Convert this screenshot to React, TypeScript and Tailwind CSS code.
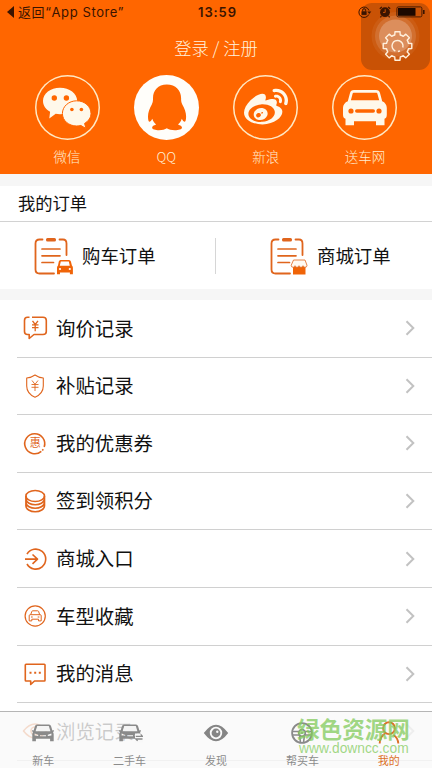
import type { ReactNode } from 'react'
import { FaWeibo } from 'react-icons/fa'

const ORANGE = '#e0651d'

// ── Status bar ──────────────────────────────────────────────────────────────
function StatusBar() {
  return (
    <div className="relative flex h-6 items-center justify-between px-[7px] text-[#3a1400]">
      <div className="flex items-center gap-1">
        <svg width="7" height="12" viewBox="0 0 7 12" fill="currentColor"><path d="M7 0v12L0 6z" /></svg>
        <span className="whitespace-nowrap font-['Inter','Noto_Sans_CJK_SC',sans-serif] text-[13px] leading-none tracking-[0.6px]">
          返回“App Store”
        </span>
      </div>
      <span className="absolute left-[198px] top-[5px] font-['Inter',sans-serif] text-[13px] font-semibold leading-[14px] tracking-[0.9px]">
        13:59
      </span>
      <div className="relative z-10 flex items-center">
        <svg width="14" height="12" viewBox="0 0 14 12" fill="none" stroke="currentColor" strokeWidth="1">
          <path d="M10.8 8.5A5.2 5.2 0 1 1 11 4.5" />
          <path d="M9.3 5.6h4L11.3 8z" fill="currentColor" stroke="none" />
          <path d="M3.6 5.3h5v3.6h-5z" fill="currentColor" stroke="none" />
          <path d="M4.6 5.5V4.2a1.5 1.5 0 0 1 3 0v1.3" />
        </svg>
        <svg className="ml-[7px]" width="12" height="12" viewBox="0 0 12 12">
          <circle cx="6" cy="6.2" r="4.900" fill="currentColor" />
          <path d="M.8 2.8 2.9.9M11.2 2.8 9.1.9M2.4 10.2l-1 1.2M9.6 10.2l1 1.2" stroke="currentColor" strokeWidth="1.2" />
          <path d="M6.2 3.2v3.2H4" fill="none" stroke="#c85205" strokeWidth="1" />
        </svg>
        <svg className="ml-[5px]" width="29" height="12" viewBox="0 0 29 12">
          <rect x=".9" y=".9" width="25" height="10" rx="1.5" fill="none" stroke="currentColor" strokeWidth=".9" />
          <rect x="2" y="2" width="17.5" height="7.8" fill="#1c0800" />
          <path d="M27 4h1.6v4H27z" fill="currentColor" />
        </svg>
      </div>
    </div>
  )
}

// Outline of an eight-tooth cog centred on the origin
function gearPath() {
  const point = (r: number, deg: number) => {
    const a = (deg * Math.PI) / 180
    return `${(r * Math.cos(a)).toFixed(2)} ${(r * Math.sin(a)).toFixed(2)}`
  }
  let d = ''
  for (let i = 0; i < 8; i++) {
    const a = i * 45
    d += `${i === 0 ? 'M' : 'L'}${point(11.3, a - 14)}L${point(14.5, a - 10)}L${point(14.5, a + 10)}L${point(11.3, a + 14)}`
    d += `A11.3 11.3 0 0 1 ${point(11.3, a + 31)}`
  }
  return d + 'Z'
}

function AssistiveButton() {
  return (
    <button className="absolute left-[361px] top-[3px] h-[67px] w-[69px] rounded-[11px] bg-[#c95205]">
      <svg className="block" width="69" height="67" viewBox="0 0 69 67" fill="none">
        <circle cx="34.5" cy="33" r="24" fill="#fff" opacity=".06" />
        <circle cx="34.5" cy="33" r="20.5" fill="#fff" opacity=".12" />
        <circle cx="34.5" cy="33" r="16.5" fill="#fff" opacity=".22" />
        <g transform="translate(36.5 43)" stroke="#fff0dc" strokeWidth="1.4" strokeLinejoin="round">
          <path d={gearPath()} />
          <path d="M-2.2 5A5.5 5.5 0 1 1 5.3 1.5M.5 5.5 2.5 4.900" />
        </g>
      </svg>
    </button>
  )
}

// ── Social login ────────────────────────────────────────────────────────────
function WechatIcon() {
  return (
    <svg width="64" height="64" viewBox="0 0 64 64" fill="#fff8ea">
      <path d="M25 11.7c9.5 0 17.2 5.9 17.2 13.2S34.5 38.3 25 38.3c-1.5 0-3-.2-4.3-.5L14.3 42.5l.8-6.7C10.8 33.4 8 29.5 8 25 8 17.6 15.5 11.7 25 11.7z" />
      <circle cx="19.3" cy="22" r="2.7" fill="#ff6600" />
      <circle cx="31.4" cy="22" r="2.7" fill="#ff6600" />
      <path d="M41.7 24.8C33.8 24.8 27.4 30.4 27.4 37.5s6.4 12.5 14.3 12.5c1.5 0 2.9-.2 4.2-.5l5 2.9-1.3-5c3.9-2.3 6.4-5.9 6.4-9.900 0-7.1-6.4-12.7-14.3-12.7z" stroke="#ff6600" strokeWidth="1" />
      <circle cx="36.9" cy="33.5" r="1.8" fill="#ff6600" />
      <circle cx="46.4" cy="33.5" r="1.8" fill="#ff6600" />
    </svg>
  )
}

function QQIcon() {
  return (
    <svg width="64" height="64" viewBox="0 0 64 64">
      <path
        fill="#ff6600"
        d="M32.8 8.5C24 8.5 19 14.5 19 22c0 2.5 0 4-1.2 6.5C15.5 32.5 14 36.5 14 40.5c0 3 .5 5 1.3 5.2 1 .1 2-1.2 3-3 .8 2.4 2 4.3 3.8 5.8-2.4.8-4 1.8-4 3.2 0 3 11.5 3.3 14.7.5 3.2 2.8 15.2 2.5 15.2-.5 0-1.4-1.6-2.4-4-3.2 1.8-1.5 3-3.4 3.8-5.8 1 1.8 2 3.1 3 3 .8-.2 1.3-2.2 1.3-5.2 0-4-1.5-8-3.8-12-1.2-2.5-1.2-4-1.2-6.5 0-7.5-5.3-13.5-14.3-13.5z"
      />
    </svg>
  )
}

function CarCircleIcon() {
  return (
    <svg width="64" height="64" viewBox="0 0 64 64" fill="#fff8ea">
      <path
        fillRule="evenodd"
        d="M21 14h22c2.2 0 3.6 1 4 3l2.2 8.3c2.8 1.2 4.6 3.6 4.6 6.7v6.5c0 2.5-.8 3.8-2.3 4.2v6.6H43v-4H21v4h-8.5v-6.6c-1.6-.4-2.5-1.7-2.5-4.2V32c0-3.1 1.9-5.5 4.8-6.7L17 17c.4-2 1.8-3 4-3zm0 2.7c-.8 0-1.2.4-1.4 1L17.9 24.3h28.3l-1.8-6.6c-.2-.6-.6-1-1.4-1z"
      />
      <g fill="#ff6600">
        <circle cx="18" cy="35" r="2.6" />
        <circle cx="46" cy="35" r="2.6" />
        <rect x="22" y="33.2" width="20" height="3.6" rx="1.8" />
      </g>
    </svg>
  )
}

const socials: { label: string; icon: ReactNode; filled?: boolean }[] = [
  { label: '微信', icon: <WechatIcon /> },
  { label: 'QQ', icon: <QQIcon />, filled: true },
  { label: '新浪', icon: <FaWeibo size={44} color="#fff8ea" /> },
  { label: '送车网', icon: <CarCircleIcon /> },
]

function Header() {
  return (
    <header className="relative h-[174px] bg-[#ff6600]">
      <AssistiveButton />
      <StatusBar />
      <div className="mt-3 text-center text-[17.3px] font-light leading-6 text-[#fff3df]">登录 / 注册</div>
      <div className="mt-[15px] flex justify-between px-[35px]">
        {socials.map(s => (
          <div key={s.label} className="flex w-[64px] flex-col items-center">
            <div
              className={
                s.filled
                  ? 'flex size-[65px] items-center justify-center rounded-full bg-[#fffefa]'
                  : 'flex size-[65px] items-center justify-center rounded-full shadow-[inset_0_0_0_1.5px_#ffe9c4]'
              }
            >
              {s.icon}
            </div>
            <span className="mt-1.5 whitespace-nowrap text-[13.5px] font-light leading-5 text-[#ffedd0]">{s.label}</span>
          </div>
        ))}
      </div>
    </header>
  )
}

// ── Orders ──────────────────────────────────────────────────────────────────
function Clipboard({ children }: { children: ReactNode }) {
  return (
    <svg width="40" height="40" viewBox="0 0 40 40" fill="none" stroke={ORANGE} strokeWidth="1.8">
      <path d="M8.5 3.5H5.5q-4 0-4 4V33.5q0 4 4 4h14.5M25.5 3.5h3.5q3.5 0 3.5 4V19" strokeLinecap="round" />
      <rect x="12" y="2" width="10" height="3.6" rx="1.5" fill={ORANGE} stroke="none" />
      <path d="M8 13h18M8 19.8h18M8 26.5h11.5" strokeLinecap="round" strokeWidth="1.7" />
      {children}
    </svg>
  )
}

function CarBadge() {
  return (
    <g stroke="none">
      <path
        fill="#f06408"
        fillRule="evenodd"
        d="M26.5 24h8.5q1.5 0 1.9 1.5l1 4q1 1 1 2.3v6.5h-3V36.5H26v1.8h-3v-6.5q0-1.3 1-2.3l.8-4q.4-1.5 1.7-1.5zm.3 1.4-1 4.3h10l-1-4.3z"
      />
      <circle cx="26" cy="33" r="1.1" fill="#fff" />
      <circle cx="35.8" cy="33" r="1.1" fill="#fff" />
    </g>
  )
}

function ShopBadge() {
  return (
    <g>
      <path d="M23 30.5h12.5v8H23z" fill="#f06408" stroke="none" />
      <path
        d="M23.5 24h11.5l2 5.3q0 2-2 2t-2-1.6q0 1.6-2 1.6t-2-1.6q0 1.6-2 1.6t-2-1.6q0 1.6-1.9 1.6t-1.9-2z"
        fill="#fffaf2"
        strokeWidth=".8"
      />
    </g>
  )
}

function Orders() {
  return (
    <section className="border-t-[12px] border-b-[11px] border-[#f6f6f6] bg-white">
      <h2 className="h-[36px] border-b border-[#d2d2d2] pl-[18px] text-[17.3px] leading-[33px]">我的订单</h2>
      <div className="flex h-[67px] items-center text-[18.4px]">
        <div className="flex w-[215px] items-center pl-[34px]">
          <Clipboard><CarBadge /></Clipboard>
          <span className="ml-2">购车订单</span>
        </div>
        <div className="h-9 w-px bg-[#d6d6d6]" />
        <div className="flex flex-1 items-center pl-[54px]">
          <Clipboard><ShopBadge /></Clipboard>
          <span className="ml-[7px]">商城订单</span>
        </div>
      </div>
    </section>
  )
}

// ── Menu ────────────────────────────────────────────────────────────────────
const menu: { label: string; icon: ReactNode }[] = [
  {
    label: '询价记录',
    icon: (
      <>
        <path d="M7.5 2.3H5.5Q2.5 2.3 2.5 5.5V16.5q0 3 3 3h1.7v4L12 19.5h9q3.3 0 3.3-3V5.5q0-3.2-3.3-3.2H10" />
        <path d="M10.5 5.8 13.2 9.5 16 5.8M13.2 9.5v6.8M10 9.8h6.5M10 12.7h6.5" strokeWidth="1.3" />
      </>
    ),
  },
  {
    label: '补贴记录',
    icon: (
      <>
        <path d="M13 2q3.5 2.5 8.3 3v8q0 7.500-8.3 11.3Q4.7 20.5 4.7 13V5Q9.5 4.5 13 2z" strokeWidth="1.1" />
        <path d="M10 7.5 13 11.3 16 7.5M13 11.3v6.7M9.5 11.5h7M9.5 14.3h7" strokeWidth=".9" />
      </>
    ),
  },
  {
    label: '我的优惠券',
    icon: (
      <>
        <path d="M19.3 21.3A10 10 0 1 1 22.2 17M21.3 19.2l-1 1.2" />
        <text x="13.2" y="17" textAnchor="middle" fontSize="11" fill={ORANGE} stroke="none">惠</text>
      </>
    ),
  },
  {
    label: '签到领积分',
    icon: (
      <>
        <ellipse cx="13.2" cy="8" rx="9.3" ry="5.5" />
        <path d="M3.9 8v10c0 3 4.2 5.7 9.3 5.7s9.3-2.7 9.3-5.7V8M4 11.5c.5 2.9 4.4 5.2 9.2 5.2s8.7-2.3 9.2-5.2M4 15c.5 2.9 4.4 5.2 9.2 5.2s8.7-2.3 9.2-5.2" />
      </>
    ),
  },
  {
    label: '商城入口',
    icon: (
      <>
        <path d="M5 8.2A10 10 0 1 1 5 18" />
        <path d="M3 13.1h12M10.500 8.500l5 4.600-5 4.700" />
      </>
    ),
  },
  {
    label: '车型收藏',
    icon: (
      <>
        <circle cx="13.2" cy="13" r="10.1" strokeWidth="1.2" />
        <path d="M8.7 11.7 9.8 8.5q.2-.7 1-.7h4.800q.8 0 1 .7l1.100 3.200M8.200 11.700h10q1 0 1 1v5.200h-2.700v-1.700H9.800v1.700H7.200v-5.200q0-1 1-1zM9 14h1.700M15.700 14h1.700" strokeWidth="1" />
      </>
    ),
  },
  {
    label: '我的消息',
    icon: (
      <>
        <path d="M4 3.3h18.300q.7 0 .7.700v15.300q0 .7-.7.700H12.500L8.700 23.500V20H4q-.7 0-.7-.7V4q0-.7.700-.7z" />
        <path d="M7.500 11.700h2M12.200 11.700h2M16.800 11.700h2" strokeWidth="2" />
      </>
    ),
  },
  {
    label: '浏览记录',
    icon: (
      <>
        <path d="M1.5 13Q7 6 13 6t11.500 7Q19 20 13 20T1.500 13z" />
        <circle cx="13" cy="13" r="4" />
      </>
    ),
  },
]

function Menu() {
  return (
    <ul className="bg-white">
      {menu.map(item => (
        <li key={item.label} className="ml-[17px] flex h-[57.6px] items-center border-b border-[#d0d0d0] pl-[5px] pr-[17px]">
          <svg width="26" height="26" viewBox="0 0 26 26" fill="none" stroke={ORANGE} strokeWidth="1.6" strokeLinejoin="round">
            {item.icon}
          </svg>
          <span className="ml-2 flex-1 pb-0.5 text-[19.4px] leading-none">{item.label}</span>
          <svg width="10" height="16" viewBox="0 0 10 16" fill="none" stroke="#c2c2c2" strokeWidth="2">
            <path d="M1.5 1.2 8.3 8l-6.800 6.800" />
          </svg>
        </li>
      ))}
    </ul>
  )
}

// ── Tab bar ─────────────────────────────────────────────────────────────────
function TabCar({ swap }: { swap?: boolean }) {
  return (
    <svg width="26" height="24" viewBox="0 0 26 24" fill="#8a8a8a">
      <path d="M5.600 10.200 7.200 4.900h11.600l1.600 5.300z" fill="#f4f4f4" />
      <path
        fillRule="evenodd"
        d="M7 3.5h12q1.500 0 2 1.500l1.400 4.600 1.400-.6v1.500l-.8.500q.7 1 .7 2.500v6.700h-3.600V17.800H5.900v2.400H2.300v-6.700q0-1.500.7-2.500l-.8-.5V9l1.400.6L5 5q.5-1.500 2-1.500zm.2 1.400-1.600 5.300h14.800l-1.600-5.300zM4.600 12.500v2l3.600.6v-1.400zM21.400 12.500v2l-3.600.6v-1.400zM10 14.200h6v1.100h-6z"
      />
      {swap && (
        <>
          <path d="M18 12.500h8v9h-8z" fill="#f8f8f8" />
          <path d="M18.800 15.300h6.700l-1.800-1.900M25.500 18h-6.700l1.800 1.900" fill="none" stroke="#8a8a8a" strokeWidth="1.300" />
        </>
      )}
    </svg>
  )
}

const tabs: { label: string; icon: ReactNode }[] = [
  { label: '新车', icon: <TabCar /> },
  { label: '二手车', icon: <TabCar swap /> },
  {
    label: '发现',
    icon: (
      <svg width="26" height="24" viewBox="0 0 26 24">
        <path fillRule="evenodd" fill="#858585" d="M.8 12Q7 3.7 13 3.7T25.2 12Q19 20.3 13 20.3T.8 12zM13 5.8a6.2 6.2 0 1 0 0 12.4 6.2 6.2 0 0 0 0-12.400z" />
        <circle cx="13" cy="12" r="4.4" fill="#858585" />
        <circle cx="14.3" cy="10.7" r="1.2" fill="#f8f8f8" />
      </svg>
    ),
  },
  {
    label: '帮买车',
    icon: (
      <svg width="26" height="24" viewBox="0 0 26 24" fill="none" stroke="#8a8a8a">
        <circle cx="13" cy="12" r="9.9" strokeWidth="1.8" />
        <path d="M3.5 10.5h6.3M16.2 10.5h6.3M4 14h6.5l1 7.5M22 14h-6.500l-1 7.500" strokeWidth="1.6" />
        <circle cx="13" cy="12" r="3.3" strokeWidth="1.7" />
        <circle cx="13" cy="12" r="1" fill="#8a8a8a" stroke="none" />
      </svg>
    ),
  },
  {
    label: '我的',
    icon: (
      <svg width="26" height="24" viewBox="0 0 26 24" fill="none" stroke="#dc7128" strokeWidth="1.9">
        <circle cx="13" cy="7.2" r="5.9" />
        <path d="M9 12.7Q4 15.5 3.7 22.5M17.5 14q4.5 3 4.8 8.5" />
      </svg>
    ),
  },
]

function TabBar() {
  return (
    <nav className="absolute inset-x-0 bottom-0 flex h-[57px] border-t border-[#b5b5b5] bg-[#f9f9f9]/80">
      {tabs.map(tab => (
        <div
          key={tab.label}
          className={
            tab.label === '我的'
              ? 'flex flex-1 flex-col items-center pt-[9px] text-[#dc7128]'
              : 'flex flex-1 flex-col items-center pt-[9px] text-[#8c8c8c]'
          }
        >
          {tab.icon}
          <span className="mt-[7px] text-[11px] leading-4">{tab.label}</span>
        </div>
      ))}
    </nav>
  )
}

function Watermark() {
  return (
    <div className="pointer-events-none absolute left-[297px] top-[716px] whitespace-nowrap text-[#83cb5c]/75">
      <div className="text-[22.6px] font-bold leading-[26px]">绿色资源网</div>
      <div className="pl-0.5 font-['Liberation_Sans',sans-serif] text-[13.8px] leading-[14px]">www.downcc.com</div>
    </div>
  )
}

export default function App() {
  return (
    <main className="relative h-[768px] w-[432px] overflow-hidden bg-white font-['Noto_Sans_CJK_SC',sans-serif] text-[#111]">
      <Header />
      <Orders />
      <Menu />
      <TabBar />
      <Watermark />
    </main>
  )
}
